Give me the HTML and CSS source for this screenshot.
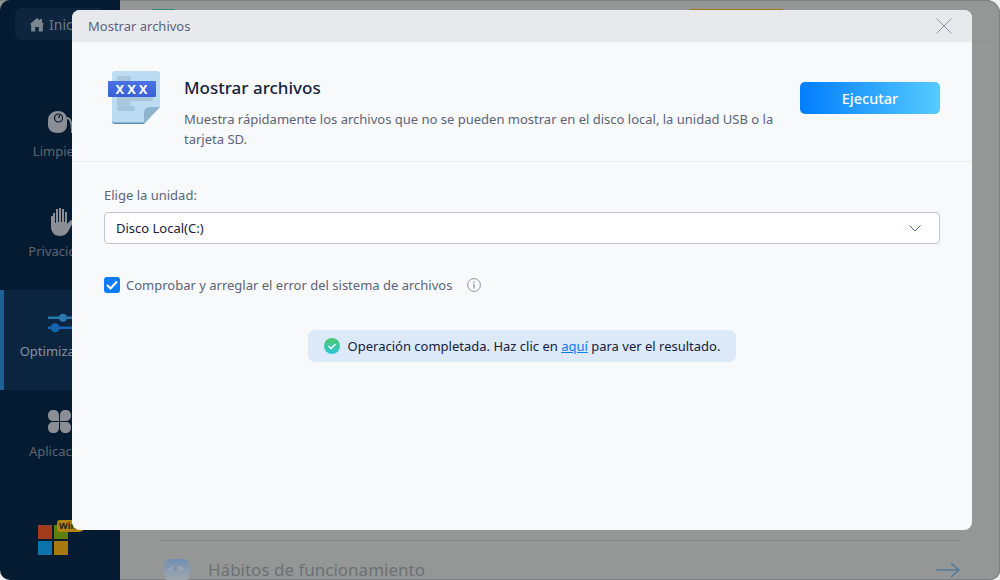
FILE: index.html
```html
<!DOCTYPE html>
<html lang="es">
<head>
  <meta charset="UTF-8">
  <title>Mostrar archivos</title>
  <link rel="stylesheet" href="styles.css">
</head>
<body>
  <div class="app">
    <aside class="sidebar">
      <div class="home-link">
        <svg class="home-icon" width="14" height="15" viewBox="0 0 14 15"><path d="M7 1 L10 3.6 V2 H12 V5.3 L14 7 L12.800 8 V14.500 H8.800 V10 H5.200 V14.500 H1.200 V8 L0 7 Z"/></svg>
        <span>Inicio</span>
      </div>
      <nav class="nav">
        <div class="nav-item">
          <svg width="40" height="34" viewBox="0 0 40 34">
            <path class="nav-fill" d="M11 3 C17 3 20 7 20 12 V17 C20 22 16 25 11 25 C5 25 1 22 1 17 V12 C1 7 5 3 11 3 Z"/>
            <circle cx="11.500" cy="10" r="4" fill="#8b8e94" stroke="#051b32" stroke-width="1.200"/>
            <path d="M11.500 10 L13 7" stroke="#051b32" stroke-width="1.200"/>
            <path d="M20 10 C24 10 25 16 25 25" fill="none" stroke="#8b8e94" stroke-width="2"/>
          </svg>
          <span>Limpieza</span>
        </div>
        <div class="nav-item">
          <svg width="40" height="34" viewBox="0 0 40 34"><path class="nav-fill" d="M4 8 V18 C4 25 8 28 13 28 C19 28 21 24 23 20 L27 13 L24 12 L20 16 V4 H18 V14 H17 V1 H15 V14 H14 V0 H12 V14 H11 V1 H9 V15 H8 V5 H6 V8 Z"/></svg>
          <span>Privacidad</span>
        </div>
        <div class="nav-item active">
          <svg width="40" height="34" viewBox="0 0 40 34">
            <rect x="0" y="8.500" width="36" height="2.500" fill="#2a78ad"/>
            <circle cx="15" cy="9.700" r="4" fill="#2a78ad"/>
            <rect x="0" y="18.500" width="36" height="2.500" fill="#1565b0"/>
            <circle cx="7" cy="19.700" r="4.500" fill="#1565b0"/>
          </svg>
          <span>Optimización</span>
        </div>
        <div class="nav-item">
          <svg width="40" height="34" viewBox="0 0 40 34"><path class="nav-fill" d="M6.500 2 C10 2 12 4 12 7.500 V13 H6.500 C3 13 1 11 1 7.500 C1 4 3 2 6.500 2 Z M18.500 2 C22 2 24 4 24 7.500 C24 11 22 13 18.500 13 H13 V7.500 C13 4 15 2 18.500 2 Z M6.500 14 H12 V19.500 C12 23 10 25 6.500 25 C3 25 1 23 1 19.500 C1 16 3 14 6.500 14 Z M13 14 H18.500 C22 14 24 16 24 19.500 C24 23 22 25 18.500 25 C15 25 13 23 13 19.500 Z"/></svg>
          <span>Aplicación</span>
        </div>
      </nav>
      <div class="win-logo">
        <div class="win-tiles">
          <i class="tile-red"></i><i class="tile-green"></i><i class="tile-blue"></i><i class="tile-yellow"></i>
        </div>
        <span class="win-badge">Win</span>
      </div>
    </aside>

    <main class="backdrop">
      <div class="top-strip">
        <span class="top-tab-teal"></span>
        <span class="top-tab-orange"></span>
      </div>
      <div class="bottom-row">
        <svg class="habit-icon" width="28" height="24" viewBox="0 0 28 24">
          <defs><linearGradient id="habitGrad" x1="0" y1="0" x2="0" y2="1"><stop offset="0" stop-color="#6f8fb4"/><stop offset="1" stop-color="#a3a9ad"/></linearGradient></defs>
          <path d="M8 1 H20 C25 1 27 5 27 12 C27 19 25 24 20 24 H8 C3 24 1 19 1 12 C1 5 3 1 8 1 Z" fill="url(#habitGrad)"/>
          <path d="M5 11 C9 7 17 7 22 11 C17 14 9 14 5 11 Z" fill="#9aa6b3"/>
          <circle cx="12" cy="10.500" r="2.500" fill="#7f94ad"/>
        </svg>
        <span class="habit-label">Hábitos de funcionamiento</span>
        <svg class="habit-arrow" width="24" height="16" viewBox="0 0 24 16"><path d="M0 8 H23 M15 1 L23 8 L15 15" fill="none" stroke="#4f7a9f" stroke-width="1.500"/></svg>
      </div>
    </main>
  </div>

  <!-- Dialog -->
  <div class="dialog">
    <div class="dialog-title">
      <span>Mostrar archivos</span>
      <svg class="close-icon" width="16" height="16" viewBox="0 0 16 16"><path d="M.5 .5 L15.500 15.500 M15.500 .5 L.5 15.500" stroke="#8f96a3" stroke-width="1" fill="none"/></svg>
    </div>

    <section class="dialog-head">
      <svg class="file-icon" width="52" height="54" viewBox="0 0 52 54">
        <defs><linearGradient id="bandGrad" x1="0" y1="0" x2="0" y2="1"><stop offset="0" stop-color="#4a72e6"/><stop offset="1" stop-color="#3a60d6"/></linearGradient></defs>
        <path d="M7 0 H49 Q52 0 52 3 V36 L36 53 H7 Q4 53 4 50 V3 Q4 0 7 0 Z" fill="#bcdcf4"/>
        <path d="M4 50 Q4 53 7 53 H36 V51.500 H7 Q4.500 51.500 4 50 Z" fill="#5f8fb0"/>
        <path d="M52 36 L36 53 V42 Q36 36 42 36 Z" fill="#8db5cf"/>
        <rect x="9" y="5" width="14" height="30" rx="2" fill="#a9c8dd"/>
        <rect x="9" y="25" width="36" height="5" rx="1" fill="#a9c8dd"/>
        <rect x="9" y="35" width="18" height="5" rx="2" fill="#a3c5db"/>
        <rect x="0" y="10" width="48" height="16" rx="1" fill="url(#bandGrad)"/>
        <text class="file-xxx" x="25" y="23" text-anchor="middle">XXX</text>
      </svg>
      <div class="head-text">
        <h1>Mostrar archivos</h1>
        <p>Muestra rápidamente los archivos que no se pueden mostrar en el disco local, la unidad USB o la tarjeta SD.</p>
      </div>
      <button class="run-button">Ejecutar</button>
    </section>

    <section class="dialog-body">
      <label class="field-label">Elige la unidad:</label>
      <div class="select-box">
        <span>Disco Local(C:)</span>
        <svg width="12" height="7" viewBox="0 0 12 7"><path d="M.5 .5 L6 6 L11.500 .5" fill="none" stroke="#4f6f94" stroke-width="1"/></svg>
      </div>
      <div class="check-row">
        <span class="checkbox">
          <svg width="12" height="10" viewBox="0 0 12 10"><path d="M1 5 L4.500 8.500 L11 1.500" fill="none" stroke="#fff" stroke-width="2"/></svg>
        </span>
        <span class="check-label">Comprobar y arreglar el error del sistema de archivos</span>
        <svg class="info-icon" width="14" height="14" viewBox="0 0 14 14"><circle cx="7" cy="7" r="6.400" fill="none" stroke="#8d94a3"/><rect x="6.400" y="6" width="1.300" height="4.500" fill="#8d94a3"/><rect x="6.400" y="3.500" width="1.300" height="1.400" fill="#8d94a3"/></svg>
      </div>
      <div class="notice-wrap">
        <div class="notice">
          <svg width="16" height="16" viewBox="0 0 16 16">
            <defs><linearGradient id="okGrad" x1="0" y1="0" x2="0" y2="1"><stop offset="0" stop-color="#4fca6c"/><stop offset="1" stop-color="#2cc4de"/></linearGradient></defs>
            <circle cx="8" cy="8" r="8" fill="url(#okGrad)"/>
            <path d="M4.500 8 L7 10.500 L11.500 6" fill="none" stroke="#e8f6ee" stroke-width="1.600"/>
          </svg>
          <span>Operación completada. Haz clic en <a href="#">aquí</a> para ver el resultado.</span>
        </div>
      </div>
    </section>
  </div>
</body>
</html>
```

FILE: styles.css
```css
* {
  box-sizing: border-box;
}

html, body {
  margin: 0;
  height: 100%;
  overflow: hidden;
}

body {
  font-family: 'Noto Sans', 'Open Sans', sans-serif;
  background: #f0f0f0;
  position: relative;
}

.app {
  display: flex;
  height: 580px;
  background: #959796;
  border-radius: 0 14px 10px 10px;
  box-shadow: inset 0 1px 0 #7e8084, inset -1px 0 0 #7e8084, inset 0 -1px 0 #7e8084;
  overflow: hidden;
}

/* Left menu, dimmed behind the dialog */
.sidebar {
  width: 120px;
  flex: none;
  background: #051b32;
  border-radius: 10px 0 0 10px;
  display: flex;
  flex-direction: column;
  padding-top: 8px;
}

.home-link {
  display: flex;
  align-items: center;
  gap: 5px;
  width: 90px;
  height: 32px;
  margin-left: 15px;
  padding-left: 15px;
  background: #0d263e;
  border-radius: 6px;
  color: #6d7885;
  font-size: 14px;
}

.home-icon {
  fill: #7b8590;
}

.nav {
  margin-top: 50px;
  display: flex;
  flex-direction: column;
}

.nav-item {
  height: 100px;
  display: flex;
  flex-direction: column;
  align-items: flex-start;
  padding-top: 18px;
  color: #5b6774;
  font-size: 13px;
  text-align: center;
}

.nav-item svg {
  margin-left: 47px;
  flex: none;
}

.nav-item span {
  width: 120px;
  line-height: 18px;
}

.nav-fill {
  fill: #8b8e94;
}

.nav-item.active {
  background: #0b2540;
  border-left: 4px solid #1c6294;
  color: #8993a0;
}

.nav-item.active svg {
  margin-left: 44px;
}

.nav-item.active span {
  width: 112px;
}

.win-logo {
  position: relative;
  margin: 35px 0 0 38px;
}

.win-tiles {
  display: grid;
  grid-template-columns: 14px 14px;
  grid-template-rows: 14px 14px;
  gap: 2px;
}

.win-tiles i {
  display: block;
}

.tile-red { background: #a23a1c; }
.tile-green { background: #5c7f10; }
.tile-blue { background: #0a74a8; }
.tile-yellow { background: #a67a0e; }

.win-badge {
  position: absolute;
  left: 19px;
  top: -5px;
  width: 28px;
  height: 12px;
  background: #b5830f;
  border-radius: 3px 6px 6px 3px;
  color: #1b1d1f;
  font-size: 9px;
  font-weight: 700;
  line-height: 12px;
  padding-left: 2px;
}

.backdrop {
  flex: 1;
  display: flex;
  flex-direction: column;
  justify-content: space-between;
}

.top-strip {
  height: 42px;
  border-bottom: 1px solid #8e908f;
  padding: 9px 217px 0 32px;
  display: flex;
  justify-content: space-between;
  align-items: flex-start;
}

.top-tab-teal {
  width: 23px;
  height: 2px;
  background: #2b8f80;
}

.top-tab-orange {
  width: 93px;
  height: 2px;
  background: #a2761c;
}

.bottom-row {
  margin: 0 40px;
  height: 40px;
  border-top: 1px solid #80848c;
  display: flex;
  align-items: center;
  padding-top: 18px;
  color: #6d7075;
  font-size: 17px;
}

.habit-icon {
  margin-left: 3px;
}

.habit-label {
  margin-left: 17px;
  flex: 1;
}

/* Dialog */
.dialog {
  position: absolute;
  left: 72px;
  top: 10px;
  width: 900px;
  height: 520px;
  background: #f8f9fb;
  border-radius: 8px;
  overflow: hidden;
}

.dialog-title {
  height: 32px;
  background: #e8e9ed;
  display: flex;
  align-items: center;
  justify-content: space-between;
  padding: 0 20px 0 16px;
  color: #5c6478;
  font-size: 13px;
}

.dialog-head {
  height: 120px;
  display: flex;
  align-items: flex-start;
  padding: 29px 32px 0 36px;
  border-bottom: 1px solid #e8eaef;
}

.file-icon {
  flex: none;
  margin-right: 24px;
}

.file-xxx {
  fill: #fff;
  font-family: 'Noto Sans', sans-serif;
  font-size: 13px;
  font-weight: 700;
  letter-spacing: 3px;
}

.head-text {
  width: 600px;
}

.head-text h1 {
  margin: 6px 0 0;
  color: #16213e;
  font-size: 17px;
  font-weight: 500;
  line-height: 22px;
}

.head-text p {
  margin: 10px 0 0;
  color: #5c6478;
  font-size: 13px;
  line-height: 20px;
}

.run-button {
  margin: 11px 0 0 auto;
  width: 140px;
  height: 32px;
  border: none;
  border-radius: 5px;
  background: linear-gradient(90deg, #027dff, #56cbff);
  color: #fff;
  font-family: inherit;
  font-size: 14.5px;
  font-weight: 500;
}

.dialog-body {
  padding: 24px 32px 0;
}

.field-label {
  display: block;
  color: #5c6478;
  font-size: 13px;
  line-height: 18px;
}

.select-box {
  margin-top: 8px;
  height: 32px;
  background: #fff;
  border: 1px solid #c2c7d6;
  border-radius: 4px;
  display: flex;
  align-items: center;
  justify-content: space-between;
  padding: 0 18px 0 11px;
  color: #16213e;
  font-size: 13px;
}

.check-row {
  margin-top: 33px;
  display: flex;
  align-items: center;
  height: 16px;
}

.checkbox {
  width: 16px;
  height: 16px;
  background: #0a7cff;
  border-radius: 3px;
  display: flex;
  align-items: center;
  justify-content: center;
}

.check-label {
  margin-left: 6px;
  color: #5c6478;
  font-size: 13px;
}

.info-icon {
  margin-left: 15px;
}

.notice-wrap {
  margin-top: 37px;
  display: flex;
  justify-content: center;
}

.notice {
  height: 32px;
  padding: 0 16px;
  background: #dbe9f9;
  border-radius: 7px;
  display: flex;
  align-items: center;
  gap: 8px;
  color: #16213e;
  font-size: 13px;
}

.notice a {
  color: #0a7cff;
}
```
